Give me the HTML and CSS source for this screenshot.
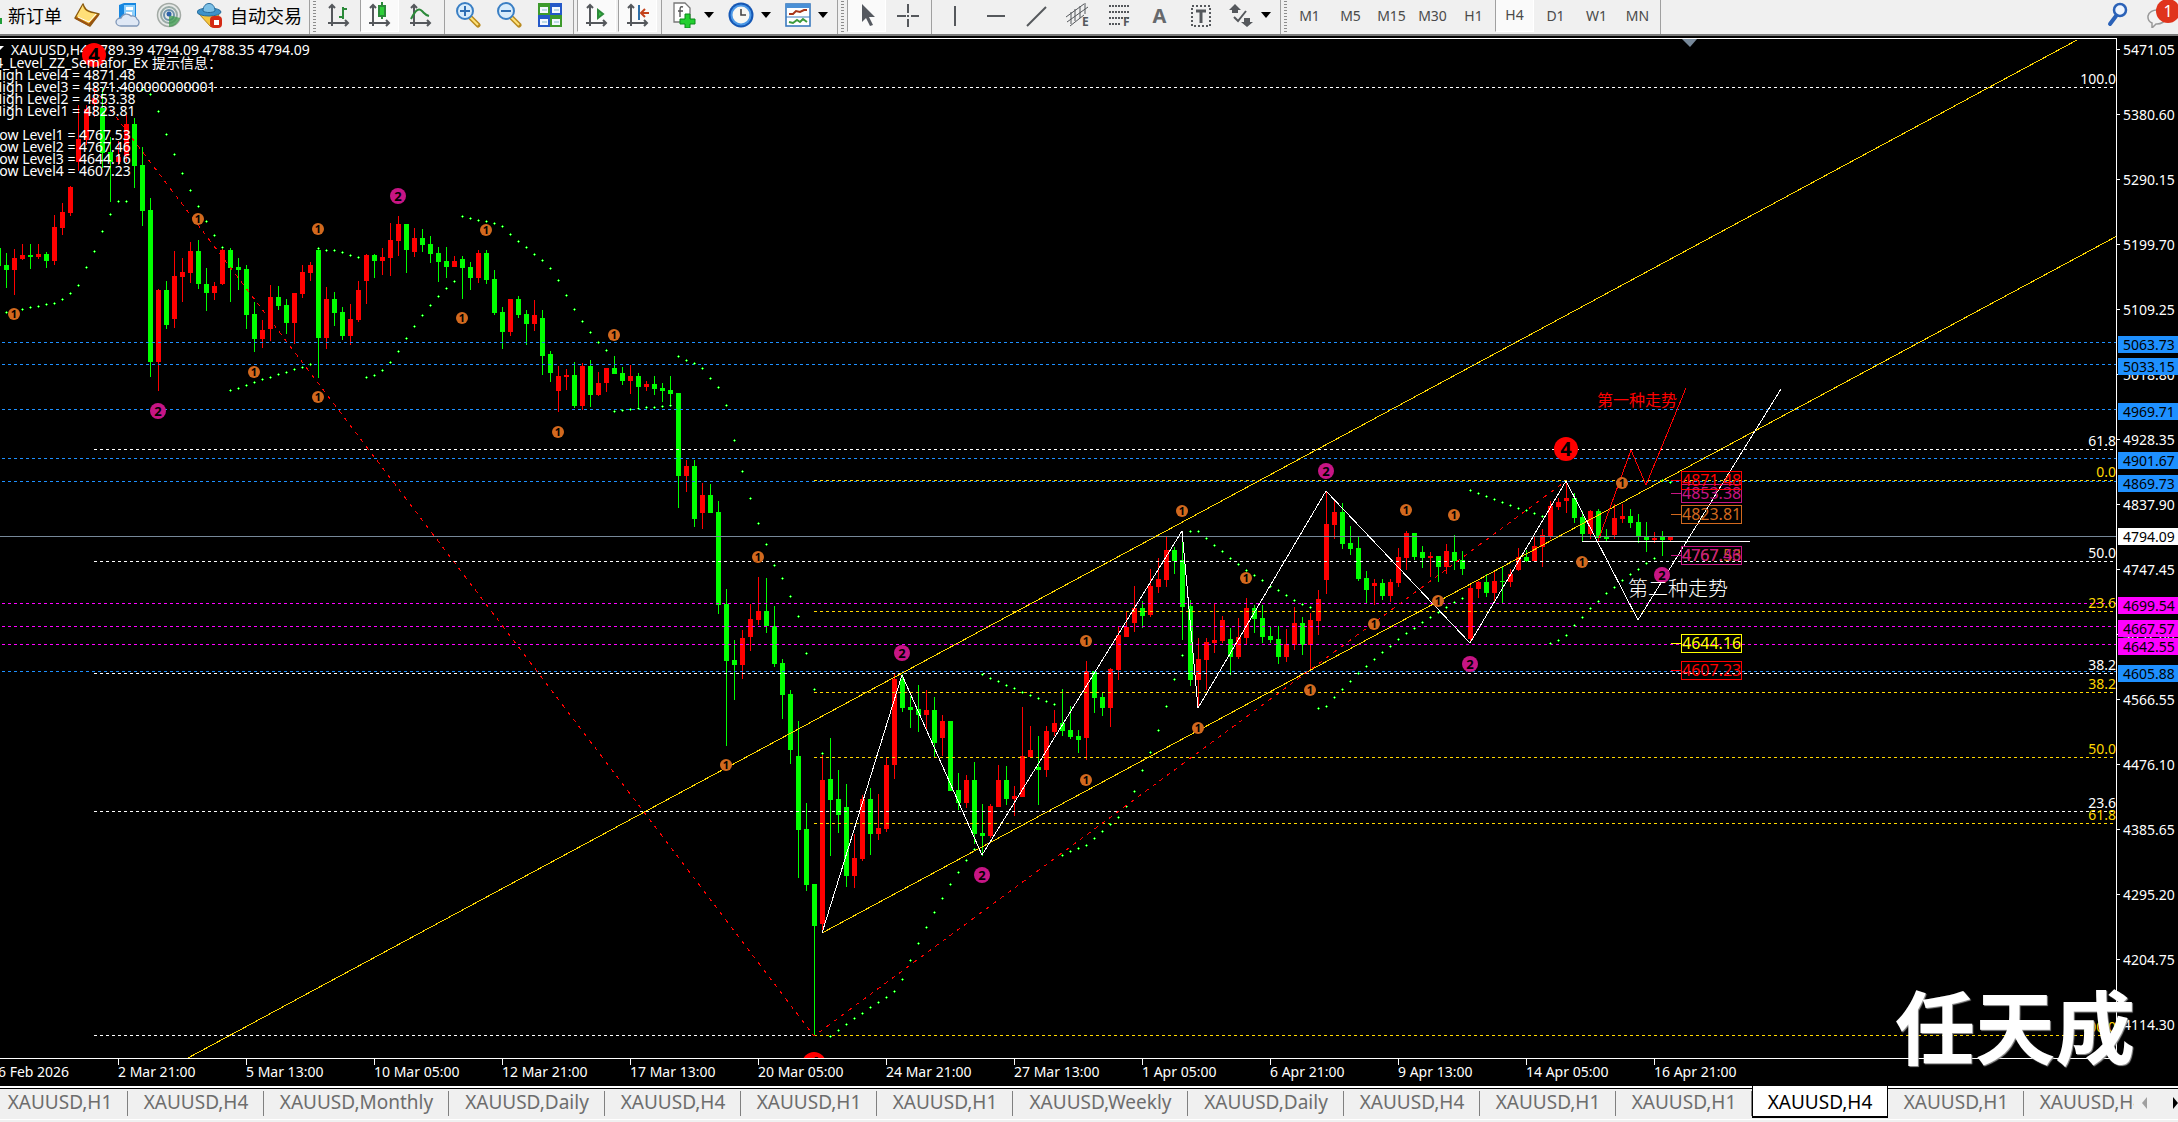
FILE: index.html
```html
<!DOCTYPE html>
<html lang="zh-CN">
<head>
<meta charset="utf-8">
<title>XAUUSD,H4</title>
<link rel="stylesheet" href="styles.css">
</head>
<body>
<header class="toolbar">
  <div class="group group-first">
    <button class="text-button order">新订单</button>
    <button class="tool" aria-label="Market watch"><svg class="icon" viewBox="0 0 26 26"><path d="M1 16 9 2c1 4 4 7 8 8l8 2-9 12z" fill="#f0b52e" stroke="#8a5a10" stroke-width="1.5" stroke-linejoin="round"/><path d="M9 3c0 5 4 8 14 9l-8 8L3 14z" fill="#ffdf78"/><path d="M2 16l13 7 9-10" fill="none" stroke="#9a5212" stroke-width="2"/><path d="M4 15l11 5 7-8" fill="none" stroke="#fff" stroke-width="1"/></svg></button>
    <button class="tool" aria-label="Data cloud"><svg class="icon" viewBox="0 0 26 26"><path d="M4 3l5-2h12v15H4z" fill="#1787e0"/><path d="M9 3h11v12H9z" fill="#8fd0fb"/><path d="M11 5h7v3h-7zM11 10h6v4h-6z" fill="#fff"/><path d="M6 24a5 4 0 0 1 0-8 6 6 0 0 1 10-2 5 4 0 0 1 6 3 4 4 0 0 1 0 7z" fill="#dfe8f5" stroke="#7f97b8" stroke-width="1.3"/></svg></button>
    <button class="tool" aria-label="Signals"><svg class="icon" viewBox="0 0 26 26"><circle cx="13" cy="13" r="11.5" fill="#e6e9e7" stroke="#a3aaa5" stroke-width="1.5"/><circle cx="13" cy="13" r="8" fill="none" stroke="#97aaa6" stroke-width="2"/><circle cx="13" cy="13" r="5" fill="none" stroke="#6f93ab" stroke-width="2"/><path d="M13 13v12a12 12 0 0 0 11-9z" fill="#3c9a4c" opacity=".75"/><circle cx="13" cy="12" r="2.5" fill="#2d62a8"/></svg></button>
    <button class="tool" aria-label="Experts"><svg class="icon" viewBox="0 0 26 26"><path d="M2 12l20 1-8 12z" fill="#f5c63c" stroke="#b78518"/><ellipse cx="12" cy="10" rx="12" ry="4" fill="#3d92c9" stroke="#256a9a"/><path d="M6 9c0-10 12-10 12 0-3 2-9 2-12 0z" fill="#7cc0e6" stroke="#256a9a"/><rect x="13" y="14" width="12" height="12" rx="4" fill="#d42a15"/><rect x="17" y="18" width="5" height="5" fill="#fff"/></svg></button>
    <button class="text-button">自动交易</button>
  </div>
  <div class="group">
    <span class="grip"></span>
    <button class="tool" aria-label="Bar chart"><svg class="icon line" viewBox="0 0 26 26"><path d="M6 3v21M2 21h20M3 6l3-3 3 3M19 18l3 3-3 3"/><path class="green" d="M17 5v12M17 7h4M13 15h4"/></svg></button>
    <button class="tool active" aria-label="Candlesticks"><svg class="icon line" viewBox="0 0 26 26"><path d="M6 3v21M2 21h20M3 6l3-3 3 3M19 18l3 3-3 3"/><path class="green" d="M15 0v17"/><path d="M12 4h6v10h-6z" class="green" fill="#2fd03a"/></svg></button>
    <button class="tool" aria-label="Line chart"><svg class="icon line" viewBox="0 0 26 26"><path d="M6 3v21M2 21h20M3 6l3-3 3 3M19 18l3 3-3 3"/><path class="green" d="M3 17C8 7 11 6 14 9s3 4 7 5"/></svg></button>
    <span class="sep"></span>
    <button class="tool" aria-label="Zoom in"><svg class="icon" viewBox="0 0 26 26"><path d="M16 16l7 7" stroke="#b98a1e" stroke-width="5" stroke-linecap="round"/><path d="M15 15l8 8" stroke="#ffe27a" stroke-width="2"/><circle cx="10" cy="9" r="8" fill="#d8ecfb" stroke="#3a7fc4" stroke-width="2"/><path d="M10 4v10M5 9h10" stroke="#2f6fb4" stroke-width="2"/></svg></button>
    <button class="tool" aria-label="Zoom out"><svg class="icon" viewBox="0 0 26 26"><path d="M16 16l7 7" stroke="#b98a1e" stroke-width="5" stroke-linecap="round"/><path d="M15 15l8 8" stroke="#ffe27a" stroke-width="2"/><circle cx="10" cy="9" r="8" fill="#d8ecfb" stroke="#3a7fc4" stroke-width="2"/><path d="M5 9h10" stroke="#2f6fb4" stroke-width="2"/></svg></button>
    <button class="tool" aria-label="Tile windows"><svg class="icon" viewBox="0 0 26 26"><path d="M1 1h12v12H1zM13 13h12v12H13z" fill="#3d9a2c"/><path d="M13 1h12v12H13zM1 13h12v12H1z" fill="#2458c8"/><path d="M3 5h8v6H3zM15 5h8v6h-8zM3 17h8v6H3zM15 17h8v6h-8z" fill="#f4f8ff"/><path d="M5 8h5M17 8h5M5 20h5M17 20h5" stroke="#8bc"/></svg></button>
    <span class="sep"></span>
    <button class="tool active" aria-label="Auto scroll"><svg class="icon line" viewBox="0 0 26 26"><path d="M6 3v21M2 21h20M3 6l3-3 3 3M19 18l3 3-3 3"/><path class="green" d="M14 8l5 4-5 4z" fill="#3cc445"/></svg></button>
    <button class="tool active" aria-label="Chart shift"><svg class="icon line" viewBox="0 0 26 26"><path d="M6 3v21M2 21h20M3 6l3-3 3 3M19 18l3 3-3 3"/><path d="M14 3v15" stroke="#2d6fa8"/><path d="M24 11h-7M20 7l-4 4 4 4" stroke="#c4431c"/></svg></button>
    <span class="sep"></span>
    <button class="tool drop" aria-label="Indicators"><svg class="icon" viewBox="0 0 26 26"><path d="M3 1h11l5 5v14H3z" fill="#fff" stroke="#777" stroke-width="1.3"/><path d="M12 5c-3-1-3 1-3 4v6M7 9h5" fill="none" stroke="#555" stroke-width="1.4"/><path d="M14 12h5v5h5v5h-5v4h-5v-4H9v-5h5z" fill="#23cf2f" stroke="#0b8a1a"/></svg></button>
    <button class="tool drop" aria-label="Periods"><svg class="icon" viewBox="0 0 26 26"><circle cx="13" cy="13" r="12.500" fill="#1557b4"/><circle cx="13" cy="13" r="10.500" fill="#4b98e6"/><circle cx="13" cy="13" r="8.500" fill="#f7f7f2"/><path d="M13 7v6h5" fill="none" stroke="#444" stroke-width="1.6"/></svg></button>
    <button class="tool drop" aria-label="Templates"><svg class="icon" viewBox="0 0 26 26"><rect x="1" y="2" width="24" height="22" fill="#fff" stroke="#3a7abf" stroke-width="1.6"/><path d="M1 2h24v4H1z" fill="#4a90d6"/><path d="M4 12h4l3-3 4 1 4-2h3" fill="none" stroke="#a8361a" stroke-width="2"/><path d="M1 15h24" stroke="#3a7abf"/><path d="M4 20l4 1 4-3 3 2 3-3 4 3" fill="none" stroke="#3b9a3b" stroke-width="2"/></svg></button>
  </div>
  <div class="group">
    <span class="grip"></span>
    <button class="tool active" aria-label="Cursor"><svg class="icon" viewBox="0 0 26 26"><path d="M8 2v18l4-4 4 8 3-1-4-8h6z" fill="#555960"/></svg></button>
    <button class="tool" aria-label="Crosshair"><svg class="icon line" viewBox="0 0 26 26"><path d="M13 2v9M13 17v8M2 14h9M16 14h8M12 14h2"/></svg></button>
    <span class="sep"></span>
    <button class="tool" aria-label="Vertical line"><svg class="icon line" viewBox="0 0 26 26"><path d="M13 4v20"/></svg></button>
    <button class="tool" aria-label="Horizontal line"><svg class="icon line" viewBox="0 0 26 26"><path d="M4 14h18"/></svg></button>
    <button class="tool" aria-label="Trendline"><svg class="icon line" viewBox="0 0 26 26"><path d="M3 24 22 5"/></svg></button>
    <button class="tool" aria-label="Equidistant channel"><svg class="icon line thin" viewBox="0 0 26 26"><path d="M1 15 19 2M2 20 23 5M5 24l14-11M6 10v12M10 7v12M15 4v12M20 1v11"/><text x="17" y="24">E</text></svg></button>
    <button class="tool" aria-label="Fibonacci"><svg class="icon line" viewBox="0 0 26 26"><path d="M3 4h20M3 10h20M3 16h20M3 22h12" stroke-dasharray="2 1"/><text x="17" y="24">F</text></svg></button>
    <button class="tool letter" aria-label="Text">A</button>
    <button class="tool" aria-label="Text label"><svg class="icon line" viewBox="0 0 26 26"><path d="M4 4h18v20H4z" stroke-dasharray="2 2"/><path d="M8 9h10M13 9v12" stroke-width="3"/></svg></button>
    <button class="tool drop" aria-label="Arrows"><svg class="icon" viewBox="0 0 26 26"><path d="M7 2l6 6h-3v3H4V8H1zM19 25l-6-5h3v-4h6v4h3z" fill="#55585c"/><path d="M6 15l4 4 8-10" fill="none" stroke="#55585c" stroke-width="2"/></svg></button>
  </div>
  <div class="group">
    <span class="grip"></span>
    <button class="tool period">M1</button>
    <button class="tool period">M5</button>
    <button class="tool period">M15</button>
    <button class="tool period">M30</button>
    <button class="tool period">H1</button>
    <button class="tool period active">H4</button>
    <button class="tool period">D1</button>
    <button class="tool period">W1</button>
    <button class="tool period">MN</button>
  </div>
  <div class="group group-last">
    <button class="tool" aria-label="Search"><svg class="icon" viewBox="0 0 26 26"><path d="M12 14l-6 8" stroke="#2b62b8" stroke-width="4" stroke-linecap="round"/><circle cx="16" cy="8" r="6" fill="#eef5ff" stroke="#2b62b8" stroke-width="2.500"/></svg></button>
    <button class="tool notices" aria-label="Notifications"><svg class="icon" viewBox="0 0 26 26"><path d="M3 14a9 7 0 1 1 8 8l-4 4 0-5a7 7 0 0 1-4-7z" fill="#f3f3f3" stroke="#999" stroke-width="1.5"/></svg><span class="badge">1</span></button>
  </div>
</header>

<main class="chart">
  <svg class="plot" id="plot" aria-label="XAUUSD,H4"></svg>
  <svg class="scale" id="scale" aria-label="Price"></svg>
  <ol class="dates">
    <li>26 Feb 2026</li><li>2 Mar 21:00</li><li>5 Mar 13:00</li><li>10 Mar 05:00</li><li>12 Mar 21:00</li><li>17 Mar 13:00</li><li>20 Mar 05:00</li><li>24 Mar 21:00</li><li>27 Mar 13:00</li><li>1 Apr 05:00</li><li>6 Apr 21:00</li><li>9 Apr 13:00</li><li>14 Apr 05:00</li><li>16 Apr 21:00</li>
  </ol>
  <div class="watermark">任天成</div>
</main>

<nav class="tabs">
  <div class="tab-strip">
    <a href="#">XAUUSD,H1</a><a href="#">XAUUSD,H4</a><a href="#" class="monthly">XAUUSD,Monthly</a><a href="#" class="daily">XAUUSD,Daily</a><a href="#">XAUUSD,H4</a><a href="#">XAUUSD,H1</a><a href="#">XAUUSD,H1</a><a href="#" class="weekly">XAUUSD,Weekly</a><a href="#" class="daily">XAUUSD,Daily</a><a href="#">XAUUSD,H4</a><a href="#">XAUUSD,H1</a><a href="#">XAUUSD,H1</a><a href="#" class="current">XAUUSD,H4</a><a href="#">XAUUSD,H1</a><a href="#">XAUUSD,H4</a>
  </div>
  <div class="tab-scroll">
    <button class="arrow arrow-left" aria-label="Previous tabs"></button>
    <button class="arrow arrow-right" aria-label="Next tabs"></button>
  </div>
</nav>
<script src="chart.js"></script>
</body>
</html>
```

FILE: styles.css
```css
* { box-sizing: border-box; }

body {
  margin: 0;
  height: 100vh;
  display: flex;
  flex-direction: column;
  overflow: hidden;
  background: #f0f0f0;
  font-family: "Noto Sans", "Noto Sans CJK SC", sans-serif;
  font-size: 14px;
}

button {
  border: 0;
  padding: 0;
  background: none;
  font: inherit;
  color: inherit;
}

/* Toolbar */
.toolbar {
  display: flex;
  flex: none;
  height: 36px;
  background: #f0f0f0;
  border-bottom: 2px solid #7a7a7a;
}

.group {
  display: flex;
  align-items: stretch;
  border-right: 1px solid #a0a0a0;
  padding-right: 2px;
}

.group-first {
  padding-left: 4px;
  padding-right: 7px;
  background: linear-gradient(#1f9d37, #1f9d37) 0 18px / 2px 6px no-repeat;
}

.group-last {
  margin-left: auto;
  border: 0;
  padding: 0;
}

.text-button {
  padding: 0 4px;
  height: 30px;
  font-family: "Noto Sans CJK SC", sans-serif;
  font-size: 18px;
  line-height: 30px;
  white-space: nowrap;
}

.tool + .text-button { padding: 0; }

.grip {
  width: 3px;
  margin: 1px 2px 1px 3px;
  background: repeating-linear-gradient(#8c8c8c 0 1px, #f0f0f0 1px 3px);
}

.sep {
  width: 1px;
  margin: 0 2px 0 3px;
  background: #a0a0a0;
}

.tool {
  position: relative;
  display: flex;
  align-items: center;
  justify-content: center;
  width: 39px;
  height: 32px;
  margin: 0 1px;
  padding-bottom: 2px;
}

.tool.active {
  background: #fafafa;
  border-left: 1px solid #a0a0a0;
  border-right: 1px solid #fff;
  border-bottom: 1px solid #fff;
}

.icon { width: 26px; height: 26px; }
.line { fill: none; stroke: #55585c; stroke-width: 2; }
.thin { stroke-width: 1; }
.line text { fill: #55585c; stroke: none; font-size: 12px; font-weight: 700; }
.line .green { stroke: #2c8a3a; }

.drop {
  width: 55px;
  justify-content: flex-start;
  padding-left: 6px;
}

.drop::after {
  content: "";
  margin-left: 7px;
  border: 5px solid transparent;
  border-top: 6px solid #000;
  border-bottom: 0;
}

.letter { font-size: 20px; font-weight: 700; color: #66696c; }
.period { font-size: 14px; color: #4a4a4a; }

.badge {
  position: absolute;
  top: -1px;
  right: -3px;
  width: 24px;
  height: 24px;
  border-radius: 12px;
  background: #e0341c;
  color: #fff;
  font-size: 16px;
  line-height: 24px;
}

/* Chart window */
.chart {
  position: relative;
  flex: 1;
  min-height: 0;
  display: grid;
  grid-template-columns: 1fr 62px;
  grid-template-rows: 1fr 27px;
  padding-top: 2px;
  background: #000;
  color: #fff;
}

.plot, .scale { width: 100%; height: 100%; min-height: 0; overflow: hidden; }
.plot { border-top: 1px solid #fff; border-bottom: 1px solid #fff; }
.scale { border-left: 1px solid #fff; }
svg text { font-family: "Noto Sans", "Noto Sans CJK SC", sans-serif; }
.crisp { shape-rendering: crispEdges; fill: none; }
.dashed { stroke-dasharray: 3 3; }
.dotted { stroke-dasharray: 4 5; }
.label { font-size: 14px; fill: #fff; }
.level { font-size: 16px; }
.note { font-family: "Noto Sans CJK SC", sans-serif; }
.note-small { font-size: 16px; }
.note-large { font-size: 20px; font-weight: 300; }
.badge-number { font-weight: 700; text-anchor: middle; fill: #000; }

.dates {
  display: flex;
  margin: 0 0 0 -10px;
  padding: 0;
  list-style: none;
  overflow: hidden;
}

.dates li {
  flex: none;
  width: 128px;
  line-height: 26px;
  white-space: nowrap;
  background: linear-gradient(#fff, #fff) 0 0 / 1px 6px no-repeat;
}

.watermark {
  position: absolute;
  right: 43px;
  bottom: 18px;
  font-family: "Noto Sans CJK SC", sans-serif;
  font-size: 80px;
  font-weight: 700;
  line-height: 90px;
  text-shadow: 1px 1px 1px #999;
}

/* Chart tabs */
.tabs {
  display: flex;
  flex: none;
  height: 36px;
  padding-bottom: 3px;
  background: linear-gradient(#fff 0 2px, #000 2px 3px, #f0f0f0 3px 33px, #fff 33px 34px, #f0f0f0 34px);
}

.tab-strip {
  display: flex;
  flex: 1;
  min-width: 0;
  margin-left: -8px;
  overflow: hidden;
}

.tab-strip a {
  flex: none;
  width: 136px;
  padding-top: 2px;
  font-size: 19px;
  line-height: 28px;
  text-align: center;
  white-space: nowrap;
  text-decoration: none;
  color: #6d6d6d;
  background: linear-gradient(#808080, #808080) right 5px / 1px 25px no-repeat;
}

.tab-strip .monthly { width: 185px; }
.tab-strip .daily { width: 156px; }
.tab-strip .weekly { width: 175px; }

.tab-strip .current {
  margin-bottom: 1px;
  background: #fff;
  border: 1px solid #000;
  border-top: 0;
  border-bottom-width: 2px;
  color: #000;
}

.tab-scroll {
  display: flex;
  align-items: center;
  justify-content: space-between;
  width: 44px;
  padding-left: 8px;
}

.arrow {
  border: 6px solid transparent;
  width: 0;
  height: 0;
}

.arrow-left { border-left: 0; border-right: 5px solid #a0a0a0; }
.arrow-right { border-right: 0; border-left: 5px solid #000; }
```

FILE: chart.js
```js
const NS = 'http://www.w3.org/2000/svg';
const TOP = 39;          // height of everything above the plot
const STEP = 8;          // distance between two bars
const FIRST = 6;         // centre of bar 0

// One row per bar, starting at bar -1: colour, high, body top, body bottom, low.
const bars = `
G248 248 266 266|G253 265 270 288|R249 258 270 295|R244 255 259 260|G244 255 257 269|R244 254 257 259|G252 254 261 268
R215 227 261 265|R203 212 228 235|R186 187 213 216|R105 139 162 171|R105 109 140 145|R86 98 104 117|G88 108 153 168
G137 152 162 202|R141 157 162 165|R115 124 156 162|G118 124 166 188|G147 165 211 226|G198 210 362 377|R289 290 362 391
G281 290 325 329|R251 276 319 328|R258 272 277 302|R242 251 273 283|G240 251 284 289|G268 284 293 311|R282 286 293 300
R249 250 284 285|G248 250 268 302|G258 267 270 290|G265 269 315 329|G302 314 339 352|R320 330 339 348|R285 297 329 341
G286 297 306 310|G299 305 323 334|R293 293 323 344|R265 272 294 298|R262 265 273 281|G248 250 338 378|R287 299 338 349
G292 299 313 326|G307 312 336 340|R304 319 336 345|R281 290 320 322|R254 255 281 304|G254 255 261 278|R248 257 261 275
R223 240 258 276|R216 224 241 256|G224 224 250 273|R228 238 252 257|G229 238 245 252|G236 244 254 263|G247 253 262 282
G247 261 267 278|R256 261 267 267|G256 259 268 299|G262 267 278 290|R250 253 278 283|G250 253 280 284|G270 279 313 315
G307 312 332 349|R299 299 332 336|G296 299 315 318|G310 314 324 345|R300 315 324 331|G310 318 356 375|G351 354 373 382
R366 376 391 412|R369 375 377 390|G362 375 406 408|R363 366 406 410|G360 366 395 407|R372 383 395 396|R368 368 383 392
G356 368 374 374|G367 373 381 385|R365 376 381 394|G373 376 387 409|R381 384 387 391|G376 384 389 395|G383 388 391 402
G376 390 394 406|G393 393 476 508|R460 466 476 492|G460 466 519 527|R483 495 513 529|G484 495 513 513|G501 512 605 614
G589 604 661 746|G640 660 665 700|R630 638 665 679|R604 619 637 651|R577 611 620 625|G578 611 626 633|G606 626 664 667
G659 663 695 719|G690 694 750 764|G721 756 830 878|G803 829 885 891|G884 884 926 1036|R753 780 924 933|G738 779 800 856
G770 799 815 833|G784 807 876 887|R834 858 876 888|R795 799 859 861|G788 799 834 855|R794 828 834 840|R758 765 829 832
R674 679 765 779|G674 679 708 712|G696 707 710 728|G685 709 715 732|R690 710 715 730|G697 710 743 758|R715 721 738 756
G721 721 791 791|G773 790 803 810|R775 780 803 808|G762 780 834 844|G804 833 836 856|R804 806 836 838|R765 780 807 807
G766 780 799 805|R786 796 799 816|R707 756 797 797|R726 750 757 757|G736 767 770 805|R726 731 770 777|R710 723 732 736
G689 723 731 736|G706 730 737 739|G730 736 740 753|R661 671 738 760|G671 671 698 713|G692 697 708 716|R668 669 708 727
R626 635 670 680|R612 627 637 637|R586 608 623 632|G601 608 616 628|R569 586 615 617|R558 579 587 593|R536 550 580 587
G547 550 561 574|G532 560 607 640|G600 606 680 686|R638 659 680 708|R638 642 660 690|R603 640 643 653|R616 620 641 643
G628 639 657 675|R618 637 657 659|R598 608 638 644|G605 608 619 633|G605 618 637 643|G627 636 640 643|G626 639 657 664
R629 644 657 662|R607 623 645 650|G617 623 645 655|R613 620 645 671|R590 599 621 635|R491 524 580 594|R499 512 525 539
G503 512 544 549|G526 543 549 555|G537 548 579 581|G571 578 590 603|R579 583 586 605|G579 583 596 600|R579 582 596 602
R548 557 583 587|R531 533 558 570|G533 533 557 560|G546 552 558 568|R552 556 558 577|G556 556 567 582|R544 551 567 574
G535 552 561 570|G551 560 569 575|R584 588 639 643|R581 582 589 598|G574 582 593 597|R571 581 593 602|G567 581 582 603
R569 574 582 587|R548 557 570 571|G550 557 561 562|R536 546 561 561|R529 535 547 567|R501 506 536 539|R498 502 507 510
R481 498 501 513|G493 498 518 523|G511 517 534 542|R510 511 534 539|G509 511 538 540|G529 537 539 541|R504 518 535 539
R504 516 519 523|G509 516 523 528|G514 522 536 543|G522 536 540 552|R532 538 540 543|G531 536 540 556|R536 536 540 541`
  .trim().split(/[|\n]/);

// Parabolic SAR runs: first bar, then one value per bar.
const sar = [
  [0, 312, 311, 309, 307, 306, 304, 303, 299, 293, 285, 267, 251, 231, 214, 201, 201],
  [17, 89, 94, 111, 134, 154, 173, 190, 206, 221, 235, 247],
  [28, 390, 388, 385, 382, 379, 377, 374, 372, 369, 367, 364],
  [39, 248, 250, 250, 252, 255, 257],
  [45, 377, 375, 370, 362, 351, 338, 326, 315, 305, 296, 288, 281],
  [57, 216, 218, 220, 221, 223, 226, 234, 241, 247, 254, 260, 268, 280, 295, 309, 321, 332, 342, 350],
  [76, 411, 410, 409, 408, 407, 407, 406, 405],
  [84, 356, 360, 363, 368, 378, 387, 405, 440, 471, 498, 523, 544, 565, 578, 596, 616, 653, 689, 753],
  [103, 1036, 1030, 1024, 1018, 1013, 1007, 1002, 997, 991, 979, 960, 943, 927, 912, 898, 884, 872, 860, 849],
  [122, 674, 678, 681, 685, 688, 692, 695, 698, 701, 704],
  [132, 855, 851, 848, 845, 838, 831, 824, 817, 806, 791, 770, 752, 730, 706, 679, 655],
  [148, 531, 531, 538, 545, 551, 558, 564, 570, 575, 580, 586, 590, 595, 600, 604, 607],
  [164, 708, 706, 697, 689, 681, 673, 666, 659, 652, 646, 639, 633, 628, 622, 617, 612, 607, 602, 598],
  [183, 490, 493, 496, 499, 502, 505, 508, 510, 513, 516],
  [193, 643, 640, 635, 625, 617, 608, 601, 593, 587, 580, 574, 569, 563, 558],
  [207, 480, 482]
];

// Semaphore marks: x, y.
const marks1 = [[14, 314], [198, 219], [318, 229], [254, 372], [318, 397], [462, 318], [486, 230], [614, 335],
  [558, 432], [758, 557], [726, 765], [1086, 641], [1086, 780], [1182, 511], [1246, 578], [1198, 728],
  [1310, 690], [1374, 624], [1406, 510], [1438, 601], [1454, 515], [1582, 562], [1622, 483]];
const marks2 = [[398, 196], [158, 411], [902, 653], [982, 875], [1326, 471], [1470, 664], [1662, 575]];
const marks4 = [[94, 55], [1566, 449], [814, 1064]];

function add(parent, name, attrs, text) {
  const el = document.createElementNS(NS, name);
  for (const key in attrs) el.setAttribute(key, attrs[key]);
  if (text !== undefined) el.textContent = text;
  parent.appendChild(el);
  return el;
}

const plot = add(document.getElementById('plot'), 'g', { transform: `translate(0 ${-TOP})` });

function hline(x, y, color, dashed = true) {
  add(plot, 'line', { class: 'crisp' + (dashed ? ' dashed' : ''), x1: x, x2: '100%', y1: y + 0.5, y2: y + 0.5, stroke: color });
}
function path(points, color, dotted) {
  add(plot, 'polyline', { class: 'crisp' + (dotted ? ' dotted' : ''), points: points, stroke: color });
}
function label(x, y, text, color = '#fff', cls = 'label') {
  return add(plot, 'text', { class: cls, x, y, style: `fill:${color}` }, text);
}
function mark([x, y], r, color, digit, size) {
  add(plot, 'circle', { cx: x, cy: y, r, fill: color });
  add(plot, 'text', { class: 'badge-number', x, y: y + Math.round(size * 0.36), 'font-size': size }, digit);
}

label(11, 55, 'XAUUSD,H4 4789.39 4794.09 4788.35 4794.09');
add(plot, 'path', { d: 'M-4 46h8l-4 4z', fill: '#fff' });
add(plot, 'path', { d: 'M1682 39h15l-7 8z', fill: '#778899' });

let red = '', green = '';
bars.forEach((row, i) => {
  const x = FIRST + (i - 1) * STEP;
  const [high, top, bottom, low] = row.slice(1).split(' ').map(Number);
  const shape = `M${x - 2} ${top}h5v${Math.max(bottom - top, 1)}h-5zM${x} ${high}h1V${low}h-1z`;
  if (row[0] === 'R') red += shape; else green += shape;
});
add(plot, 'path', { d: red, fill: '#f00', 'shape-rendering': 'crispEdges' });
add(plot, 'path', { d: green, fill: '#0f0', 'shape-rendering': 'crispEdges' });

[342, 364, 409, 458, 481, 671].forEach(y => hline(2, y, '#1e90ff'));
[603, 626, 644].forEach(y => hline(2, y, '#f0f'));
hline(0, 536, '#778899', false);

[['100.0', 87], ['61.8', 449], ['50.0', 561], ['38.2', 673], ['23.6', 811], ['', 1035]].forEach(([t, y]) => {
  hline(94, y, '#fff');
  label('100%', y - 3, t).setAttribute('text-anchor', 'end');
});
[['0.0', 480], ['23.6', 611], ['38.2', 692], ['50.0', 757], ['61.8', 823], ['100.0', 1035]].forEach(([t, y]) => {
  hline(814, y, '#ffd700');
  label('100%', y - 3, t, '#ffd700').setAttribute('text-anchor', 'end');
});

let dots = '', cores = '';
sar.forEach(([start, ...values]) => values.forEach((y, i) => {
  const x = FIRST + (start + i) * STEP;
  dots += `M${x - 1} ${y}h3v1h-3zM${x} ${y - 1}h1v3h-1z`;
  cores += `M${x} ${y}h1v1h-1z`;
}));
add(plot, 'path', { d: dots, fill: '#0f0', 'shape-rendering': 'crispEdges' });
add(plot, 'path', { d: cores, fill: '#afa', 'shape-rendering': 'crispEdges' });

path('186,1059 2077,40', '#ffd700');
path('822,933 2117,236', '#ffd700');
path('94,88 814,1036 1566,481', '#f00', true);
path('822,933 902,675 982,855 1182,531 1198,708 1326,491 1470,643 1566,481 1638,620 1781,389', '#fff');
path('1582,541.5 1750,541.5', '#fff');
path('1598,541 1631,450 1646,485 1686,388', '#f00');

marks1.forEach(m => mark(m, 6, '#d2691e', '1', 11));
marks2.forEach(m => mark(m, 8, '#c71585', '2', 13));
marks4.forEach(m => mark(m, 12, '#f00', '4', 20));

label(-5, 68, '4_Level_ZZ_Semafor_Ex 提示信息：');
[['High Level4 = 4871.48', 80], ['High Level3 = 4871.400000000001', 92], ['High Level2 = 4853.38', 104],
  ['High Level1 = 4823.81', 116], ['Low Level1 = 4767.53', 140], ['Low Level2 = 4767.46', 152],
  ['Low Level3 = 4644.16', 164], ['Low Level4 = 4607.23', 176]].forEach(([t, y]) => label(-8, y, t));

// Level tags beside the last bar: text, price position, box top, colour.
[['4853.38', 493, 484, '#c71585'], ['4871.48', 480, 471, '#f00'], ['4823.81', 514, 505, '#d2691e'],
  ['4767.53', 555, 546, '#d2691e'], ['4767.46', 555, 546, '#c71585'], ['4644.16', 643, 634, '#ff0'],
  ['4607.23', 670, 661, '#f00']].forEach(([t, y, top, c]) => {
  add(plot, 'path', { class: 'crisp', d: `M1671 ${y}.5h10M1681.5 ${top}.5h60v18h-60z`, stroke: c });
  label(1682, top + 15, t, c, 'level');
});
label(1597, 406, '第一种走势', '#f00', 'note note-small');
label(1628, 596, '第二种走势', '#fff', 'note note-large');

const scale = add(document.getElementById('scale'), 'g', { transform: `translate(0 ${-TOP + 1})` });
for (let i = 0; i < 16; i++) {
  const y = 49 + i * 65;
  add(scale, 'rect', { x: 0, y, width: 3, height: 1, fill: '#fff' });
  add(scale, 'text', { class: 'label', x: 6, y: y + 6 }, (5471.05 - i * 90.45).toFixed(2));
}
[['5063.73', 336, '#1e90ff'], ['5033.15', 358, '#1e90ff'], ['4969.71', 403, '#1e90ff'], ['4901.67', 452, '#1e90ff'],
  ['4869.73', 475, '#1e90ff'], ['4794.09', 528, '#fff'], ['4699.54', 597, '#f0f'], ['4667.57', 620, '#f0f'],
  ['4642.55', 638, '#f0f'], ['4605.88', 665, '#1e90ff']].forEach(([t, y, c]) => {
  add(scale, 'rect', { x: 1, y, width: '100%', height: 17, fill: c });
  add(scale, 'text', { class: 'label', x: 6, y: y + 14, style: 'fill:#000' }, t);
});
```
